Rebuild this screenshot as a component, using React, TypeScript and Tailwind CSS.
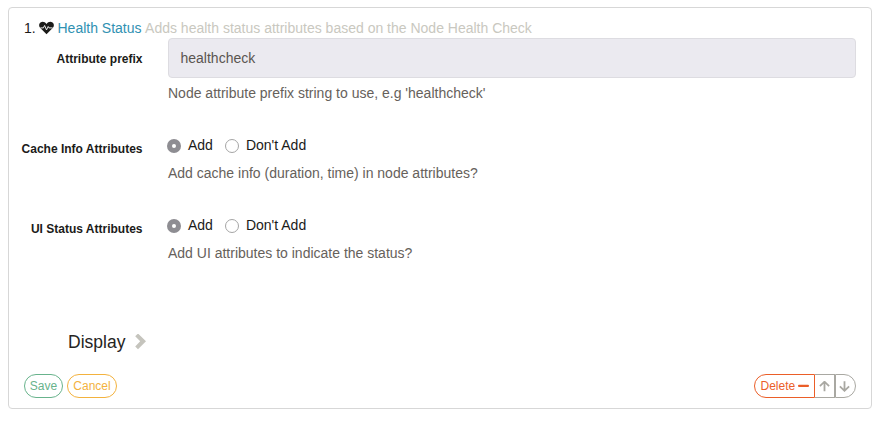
import type { ReactNode } from "react";

function Heartbeat() {
  return (
    <svg className="h-[14px] w-[15px]" viewBox="0 0 15 14">
      <path
        d="M7.5 13.2 1.3 7C-.4 5.2-.2 2.6 1.5 1.4 3.3.1 5.9.5 7.5 2.9 9.1.5 11.7.1 13.5 1.4c1.7 1.2 1.9 3.8.2 5.6Z"
        fill="#1b1b19"
      />
      <path d="M1.4 6.9h3l1.2-2.4L7.5 8.9l1.7-3.4.8 1.4h3.6" fill="none" stroke="#fff" strokeWidth=".9" />
    </svg>
  );
}

function Field({ label, children }: { label: string; children: ReactNode }) {
  return (
    <div className="flex h-20">
      <div className="w-[133.5px] pt-[13px] text-right text-[12px] leading-4 font-bold text-[#1b1b19]">
        {label}
      </div>
      <div className="ml-[25.5px] flex-1">{children}</div>
    </div>
  );
}

function Radio({ label, checked }: { label: string; checked?: boolean }) {
  return (
    <label className="flex items-center">
      {checked ? (
        <span className="mt-px flex size-[14px] items-center justify-center rounded-full bg-[#8e8d92]">
          <span className="size-1 rounded-full bg-white" />
        </span>
      ) : (
        <span className="mt-px size-[14px] rounded-full border border-[#a5a5a5] bg-white" />
      )}
      <span className="ml-[7px]">{label}</span>
    </label>
  );
}

function RadioField({ label, help }: { label: string; help: string }) {
  return (
    <Field label={label}>
      <div className="-ml-px flex gap-3 pt-[7px] leading-5 text-[#1b1b19]">
        <Radio label="Add" checked />
        <Radio label="Don't Add" />
      </div>
      <div className="pt-2 leading-5 text-[#66615b]">{help}</div>
    </Field>
  );
}

export default function App() {
  return (
    <div className="h-[426px] bg-white pt-[7px] pl-2 font-['Liberation_Sans',Arial,sans-serif] text-[14px]">
      <div className="flex h-[402px] w-[864px] flex-col rounded-[4px] border border-[#d7d7d7] pt-[10px]">
        <div className="flex h-5 items-center pl-[15px] leading-5 text-[#1b1b19]">
          <span className="w-[15px]">1.</span>
          <Heartbeat />
          <span className="ml-[3.5px] text-[#3091b2]">Health Status</span>
          <span className="ml-[3.5px] text-[#c9c8c0]">Adds health status attributes based on the Node Health Check</span>
        </div>
        <Field label="Attribute prefix">
          <div className="mr-[15px] flex h-10 items-center rounded-[4px] border border-[#dddce1] bg-[#ebeaf0] pr-3 pl-[11.5px] text-[#5a5550]">
            healthcheck
          </div>
          <div className="pt-[5px] leading-5 text-[#66615b]">Node attribute prefix string to use, e.g 'healthcheck'</div>
        </Field>
        <div className="mt-[10px]">
          <RadioField label="Cache Info Attributes" help="Add cache info (duration, time) in node attributes?" />
          <RadioField label="UI Status Attributes" help="Add UI attributes to indicate the status?" />
        </div>
        <div className="mt-[42px] flex h-6 items-center pl-[59px] text-[17.5px] text-[#252422]">
          Display
          <svg className="ml-[9.5px] h-4 w-[11px]" viewBox="0 0 11 16" fill="#c5c4bd">
            <path d="M3 -.5 11 7.3 3 15.3 .2 12.5 5.2 7.3 .2 2.3Z" />
          </svg>
        </div>
        <div className="mt-[20px] flex h-6 gap-1 px-[15px] text-[12px]">
          <button className="w-[39px] rounded-full border border-[#68b38c] text-[#68b38c]">Save</button>
          <button className="w-[50px] rounded-full border border-[#f3b23e] text-[#f3b23e]">Cancel</button>
          <div className="ml-auto flex">
            <button className="flex w-[61px] items-center rounded-l-full border border-[#eb5e28] pl-[5.5px] text-[#eb5e28]">
              Delete
              <svg className="ml-[3px] h-3 w-[11px] shrink-0" viewBox="0 0 11 12" fill="#eb5e28">
                <rect y="4.7" width="11" height="2.2" rx="1" />
              </svg>
            </button>
            <button className="flex w-5 items-center border-y border-r border-[#a9a8a2] pl-[4px]">
              <svg className="size-[11px]" viewBox="0 0 11 11" fill="none" stroke="#a9a8a2" strokeWidth="1.8">
                <path d="M5.5 10.3V.8M.9 5.1 5.5 .7 10.1 5.1" />
              </svg>
            </button>
            <button className="flex w-[21px] items-center rounded-r-full border border-[#a9a8a2] pl-[3px]">
              <svg className="size-[11px]" viewBox="0 0 11 11" fill="none" stroke="#a9a8a2" strokeWidth="1.8">
                <path d="M5.5 .2v9.5M.9 5.4 5.5 9.8 10.1 5.4" />
              </svg>
            </button>
          </div>
        </div>
      </div>
    </div>
  );
}
